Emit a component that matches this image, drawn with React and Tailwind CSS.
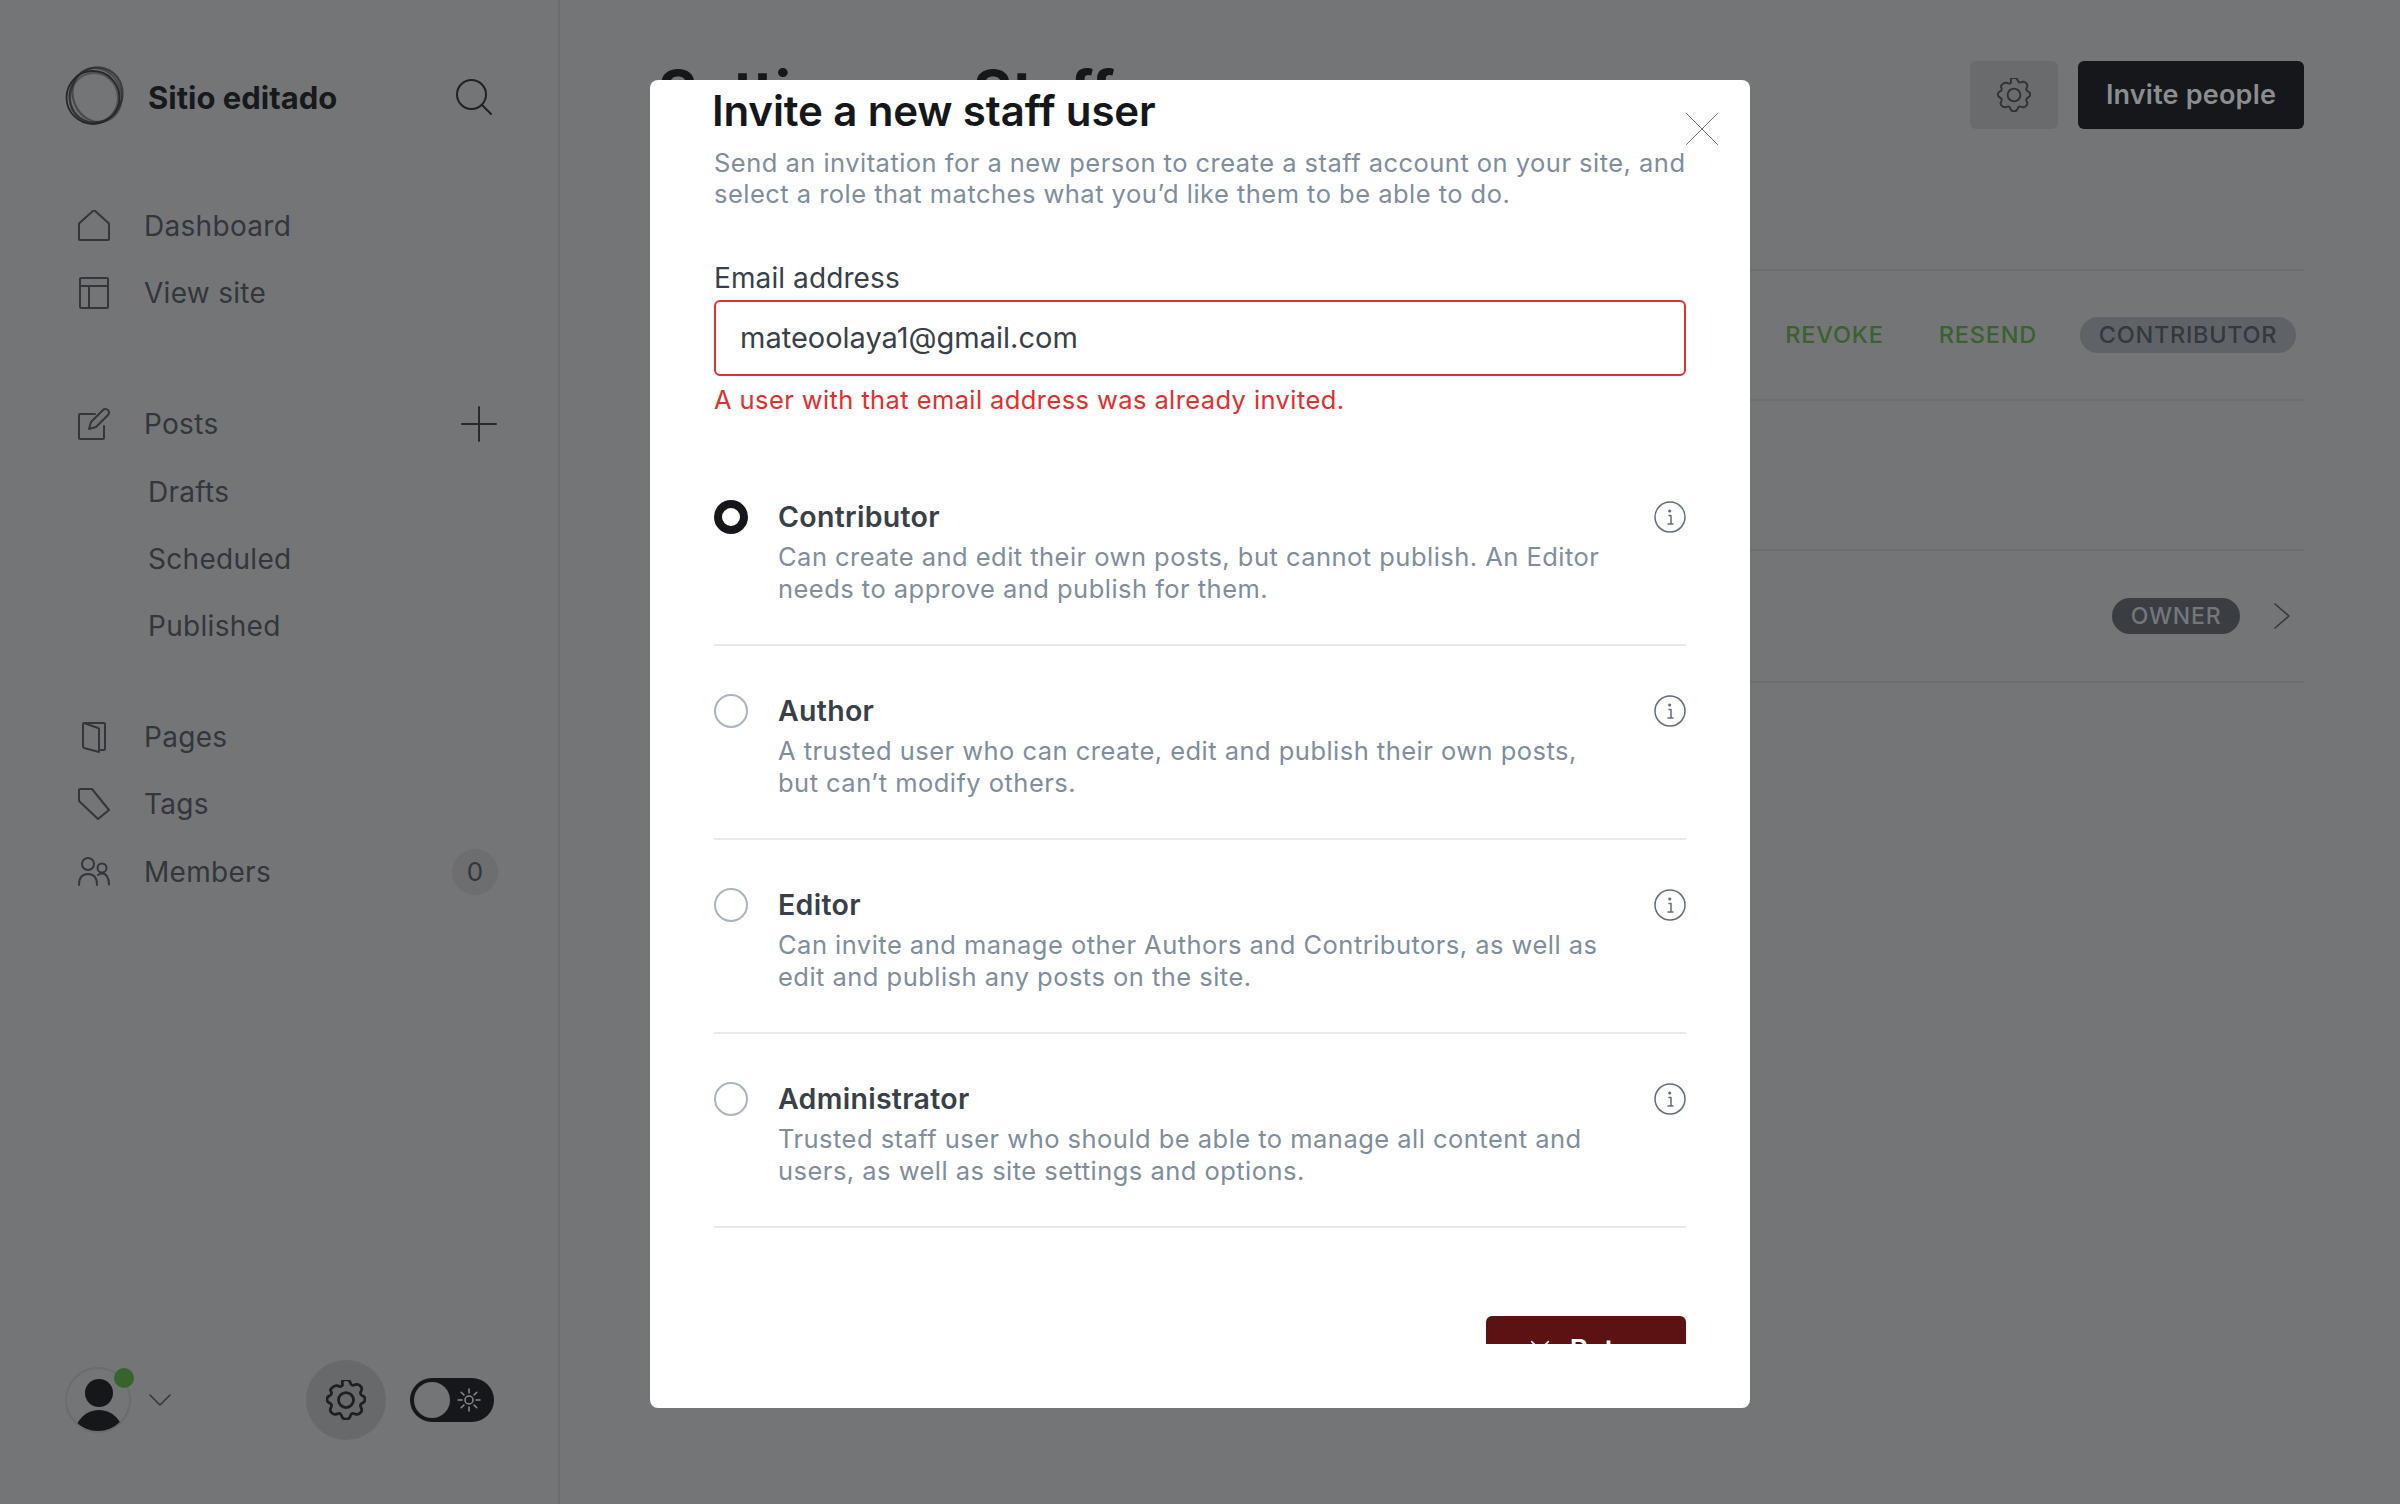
import React from "react";

const Ic = ({ className = "", children, vb = "0 0 32 32", sw = 2 }) => (
  <svg viewBox={vb} fill="none" stroke="currentColor" strokeWidth={sw} strokeLinecap="round" strokeLinejoin="round" className={className}>
    {children}
  </svg>
);

const Home = () => (
  <Ic className="w-8 h-8"><path d="M1 14.5 16 1l15 13.5V30a1 1 0 0 1-1 1H2a1 1 0 0 1-1-1z" transform="translate(0 -1)" /></Ic>
);
const Layout = () => (
  <Ic className="w-8 h-8"><rect x="2" y="1" width="28" height="30" rx="1" /><path d="M2 9h28M11 9v22" /></Ic>
);
const Edit = () => (
  <Ic className="w-8 h-8"><path d="M17 6H2a1 1 0 0 0-1 1v23a1 1 0 0 0 1 1h23a1 1 0 0 0 1-1V18" /><path d="M11 21l2-7L25 2c2-2 6-.5 6 2.5 0 1-.5 2-1 2.5L18 19z" /></Ic>
);
const Pages = () => (
  <Ic className="w-8 h-8"><path d="M7 2h19a1 1 0 0 1 1 1v25a1 1 0 0 1-1 1h-5" /><path d="M6 2l14 5a1 1 0 0 1 1 1v23L6 27a2 2 0 0 1-1-1.500V3a1 1 0 0 1 1-1z" /></Ic>
);
const Tag = () => (
  <Ic className="w-8 h-8"><path d="M2 1h12l17 21-11 9L1 13V2a1 1 0 0 1 1-1z" /></Ic>
);
const Members = () => (
  <Ic className="w-8 h-8"><circle cx="10" cy="8" r="6" /><circle cx="24" cy="12" r="4.500" /><path d="M1 29c0-7 3-11 9-11s9 4 9 11" /><path d="M20 19c1.500-1 3-1.500 4-1.500 4 0 7 4 7 11" /></Ic>
);
const Gear = ({ className, sw = 2 }) => (
  <Ic className={className} sw={sw}>
    <path d="M13 2.600c1-1.800 5-1.800 6 0l.9 2.100c.4.800 1.300 1.200 2.200.9l2.300-.6c2-.4 4.800 2.400 4.100 4.300l-.8 2c-.3.900 0 1.800.7 2.300l1.700 1.100c1.500 1 1.500 3.600 0 4.600l-1.700 1.100c-.7.500-1 1.400-.7 2.300l.8 2c.7 1.900-2.100 4.700-4.100 4.300l-2.300-.6c-.9-.3-1.800.1-2.200.9l-.9 2.100c-1 1.800-5 1.800-6 0l-.9-2.100c-.4-.8-1.300-1.200-2.200-.9l-2.300.6c-2 .4-4.800-2.400-4.100-4.300l.8-2c.3-.9 0-1.800-.7-2.300l-1.700-1.100c-1.500-1-1.500-3.600 0-4.600l1.700-1.100c.7-.5 1-1.400.7-2.300l-.8-2C3.900 8.400 6.700 5.600 8.700 6l2.300.6c.9.300 1.800-.1 2.200-.9z" transform="translate(0 -1.500)" />
    <circle cx="16" cy="16" r="6" />
  </Ic>
);
const Info = () => (
  <Ic className="w-8 h-8 text-[#626d79]" sw={1.500}>
    <circle cx="16" cy="16" r="15" />
    <path d="M15 14.500h2V23M14 23h5" />
    <circle cx="15.700" cy="10" r=".8" />
  </Ic>
);

const Nav = ({ icon, children, right, h = "h-[67px]" }) => (
  <div className={"flex items-center pl-[78px] pr-[61px] " + h}>
    <span className="w-[66px] shrink-0">{icon}</span>
    <span className="flex-1">{children}</span>
    {right}
  </div>
);
const Sub = ({ children }) => <div className="flex h-[67px] items-center pl-[148px]">{children}</div>;

const Role = ({ title, l1, l2, selected }) => (
  <div className="flex h-[194px] border-b-2 border-[#e9eaec] pt-[48px]">
    <span className={selected ? "w-[34px] h-[34px] rounded-full border-[8px] border-[#15171a] bg-white shrink-0" : "w-[34px] h-[34px] rounded-full border-2 border-[#abb4be] bg-white shrink-0"} />
    <div className="ml-[30px] flex-1">
      <div className="text-[28.500px] leading-[34px] font-semibold text-[#394047] tracking-[.3px]">{title}</div>
      <div className="mt-[7px] text-[25.500px] leading-[31.500px] text-[#7f8d9c] tracking-[.47px] whitespace-nowrap">{l1}<br />{l2}</div>
    </div>
    <span className="mt-px"><Info /></span>
  </div>
);

export default function App() {
  return (
    <div className="relative flex h-[1504px] w-[2400px] overflow-hidden bg-[#747577] text-[28px] text-[#33363b] font-['Inter',sans-serif]">
      <aside className="flex w-[560px] shrink-0 flex-col border-r-2 border-[#6b6c6e] pb-[64px] pt-[64px] tracking-[.3px]">
        <div className="flex h-[68px] items-center pl-[65px] pr-[66px]">
          <svg viewBox="0 0 60 60" className="h-[60px] w-[60px] -mt-[4px] shrink-0 text-[#26282b]" fill="none" stroke="currentColor" strokeWidth="1.800">
            <ellipse cx="28" cy="31.500" rx="26.500" ry="26.500" />
            <ellipse cx="31" cy="29" rx="26" ry="28" transform="rotate(28 31 29)" opacity=".7" strokeWidth="2.200" />
            <ellipse cx="32" cy="29" rx="24" ry="27.500" transform="rotate(-22 32 29)" opacity=".55" strokeWidth="2.200" />
            <ellipse cx="29" cy="32" rx="24" ry="25" opacity=".45" strokeWidth="2.200" />
          </svg>
          <span className="ml-[23px] flex-1 text-[31px] font-bold tracking-normal text-[#17191c]">Sitio editado</span>
          <Ic className="h-9 w-9 -mt-[3px] text-[#1f2124]" vb="0 0 36 36"><circle cx="15.500" cy="15.500" r="14.500" /><path d="m26 26 9 9" /></Ic>
        </div>
        <nav className="mt-[60px]">
          <Nav icon={<Home />}>Dashboard</Nav>
          <Nav icon={<Layout />}>View site</Nav>
          <div className="mt-[64px]">
            <Nav icon={<Edit />} h="h-[68px]" right={<Ic className="h-9 w-9 text-[#27292c]" vb="0 0 36 36"><path d="M18 1v34M1 18h34" /></Ic>}>Posts</Nav>
            <Sub>Drafts</Sub>
            <Sub>Scheduled</Sub>
            <Sub>Published</Sub>
          </div>
          <div className="mt-[44px]">
            <Nav icon={<Pages />}>Pages</Nav>
            <Nav icon={<Tag />} h="h-[68px]">Tags</Nav>
            <Nav icon={<Members />} right={<span className="flex h-[46px] w-[46px] items-center justify-center rounded-full bg-[#6d6e70] text-[26px] -mr-px">0</span>}>Members</Nav>
          </div>
        </nav>
        <div className="mt-auto flex h-[80px] items-center pl-[65px]">
          <div className="relative h-[66px] w-[66px] overflow-hidden rounded-full border-2 border-[#6b6c6e]">
            <span className="absolute left-[18px] top-[10px] h-[28px] w-[28px] rounded-full bg-[#15171a]" />
            <span className="absolute left-[8px] top-[41px] h-[48px] w-[48px] rounded-full bg-[#15171a]" />
          </div>
          <span className="absolute left-[114px] top-[1368px] h-[20px] w-[20px] rounded-full bg-[#37632f]" />
          <Ic className="ml-[18px] h-[12px] w-[22px] text-[#33363b]" vb="0 0 22 12" sw={1.500}><path d="m1 1 10 10L21 1" /></Ic>
          <span className="ml-[135px] flex h-[80px] w-[80px] items-center justify-center rounded-full bg-[#68696b] text-[#1d1f22]"><Gear className="h-[40px] w-[40px]" sw={2.200} /></span>
          <div className="ml-[24px] flex h-[44px] w-[84px] items-center rounded-full bg-[#15171a] pl-[4px]">
            <span className="h-[36px] w-[36px] rounded-full bg-[#747577]" />
            <Ic className="ml-[7px] h-[24px] w-[24px] text-[#8a8c8e]" vb="0 0 24 24" sw={1.500}><circle cx="12" cy="12" r="4" /><path d="M12 1v4M12 19v4M1 12h4M19 12h4M4.200 4.200l2.800 2.800M17 17l2.800 2.800M4.200 19.800 7 17M17 7l2.800-2.800" /></Ic>
          </div>
        </div>
      </aside>

      <main className="flex-1 pl-[98px] pr-[96px] pt-[61px]">
        <div className="flex h-[68px] items-start justify-between">
          <h1 className="flex text-[60px] font-bold leading-[62px] text-[#15171a]"><span className="w-[315px]">Settings</span><span>Staff</span></h1>
          <div className="flex gap-[20px]">
            <span className="flex h-[68px] w-[88px] items-center justify-center rounded-[6px] bg-[#6a6b6d] text-[#2f3236]"><Gear className="h-[34px] w-[34px]" sw={1.800} /></span>
            <span className="flex h-[68px] w-[226px] items-center justify-center rounded-[6px] bg-[#15171a] text-[27px] font-semibold tracking-[.2px] text-[#8b8d8f]">Invite people</span>
          </div>
        </div>
        <div className="mt-[140px] border-y-2 border-[#6d6e70]">
          <div className="flex h-[130px] items-center justify-end border-b-2 border-[#6d6e70] pr-[8px] text-[23.500px] font-medium tracking-[.8px]">
            <span className="text-[#37632f]">REVOKE</span>
            <span className="ml-[55px] text-[#37632f]">RESEND</span>
            <span className="ml-[43px] flex h-[36px] w-[216px] items-center justify-center rounded-full bg-[#5f6367] text-[#35383c] tracking-[.7px]">CONTRIBUTOR</span>
          </div>
          <div className="h-[150px] border-b-2 border-[#6d6e70]" />
          <div className="flex h-[130px] items-center justify-end pr-[14px] text-[23px] font-medium tracking-[.8px]">
            <span className="flex h-[36px] w-[128px] items-center justify-center rounded-full bg-[#3a3e42] text-[#74777a]">OWNER</span>
            <Ic className="ml-[34px] h-[26px] w-[16px] text-[#33363b]" vb="0 0 16 26" sw={1.500}><path d="m1 1 14 12L1 25" /></Ic>
          </div>
        </div>
      </main>

      <div className="absolute left-[650px] top-[80px] h-[1328px] w-[1100px] rounded-[8px] bg-white px-[64px] pb-[64px]">
        <Ic className="absolute left-[1036px] top-[33px] h-8 w-8 text-[#6f7174]" sw={1}><path d="M.5.5l31 31M31.500.5l-31 31" /></Ic>
        <div className="h-full overflow-hidden">
          <h2 className="-ml-[2px] mt-[5px] h-[52px] text-[42px] font-semibold leading-[52px] text-[#15171a] tracking-[-.13px]">Invite a new staff user</h2>
          <p className="mt-[10px] text-[25.500px] leading-[31px] text-[#7f8d9c] tracking-[.47px] whitespace-nowrap">
            Send an invitation for a new person to create a staff account on your site, and<br />select a role that matches what you’d like them to be able to do.
          </p>
          <div className="mt-[52px] text-[28px] leading-[34px] text-[#394047] tracking-[.1px]">Email address</div>
          <div className="mt-[5px] flex h-[76px] items-center rounded-[6px] border-2 border-[#e22f2f] pl-[24px] text-[29px] text-[#394047]">mateoolaya1@gmail.com</div>
          <div className="mt-[8px] text-[25.500px] leading-[32px] text-[#e22f2f] tracking-[.4px]">A user with that email address was already invited.</div>
          <div className="mt-[36px]">
            <Role selected title="Contributor" l1="Can create and edit their own posts, but cannot publish. An Editor" l2="needs to approve and publish for them." />
            <Role title="Author" l1="A trusted user who can create, edit and publish their own posts," l2="but can’t modify others." />
            <Role title="Editor" l1="Can invite and manage other Authors and Contributors, as well as" l2="edit and publish any posts on the site." />
            <Role title="Administrator" l1="Trusted staff user who should be able to manage all content and" l2="users, as well as site settings and options." />
          </div>
          <div className="mt-[88px] flex justify-end">
            <span className="flex h-[68px] w-[200px] items-center justify-center gap-[20px] rounded-[6px] bg-[#5c1112] text-[28px] font-semibold text-white">
              <Ic className="h-[20px] w-[20px]" vb="0 0 24 24"><path d="m2 2 20 20M22 2 2 22" /></Ic>Retry
            </span>
          </div>
        </div>
      </div>
    </div>
  );
}
